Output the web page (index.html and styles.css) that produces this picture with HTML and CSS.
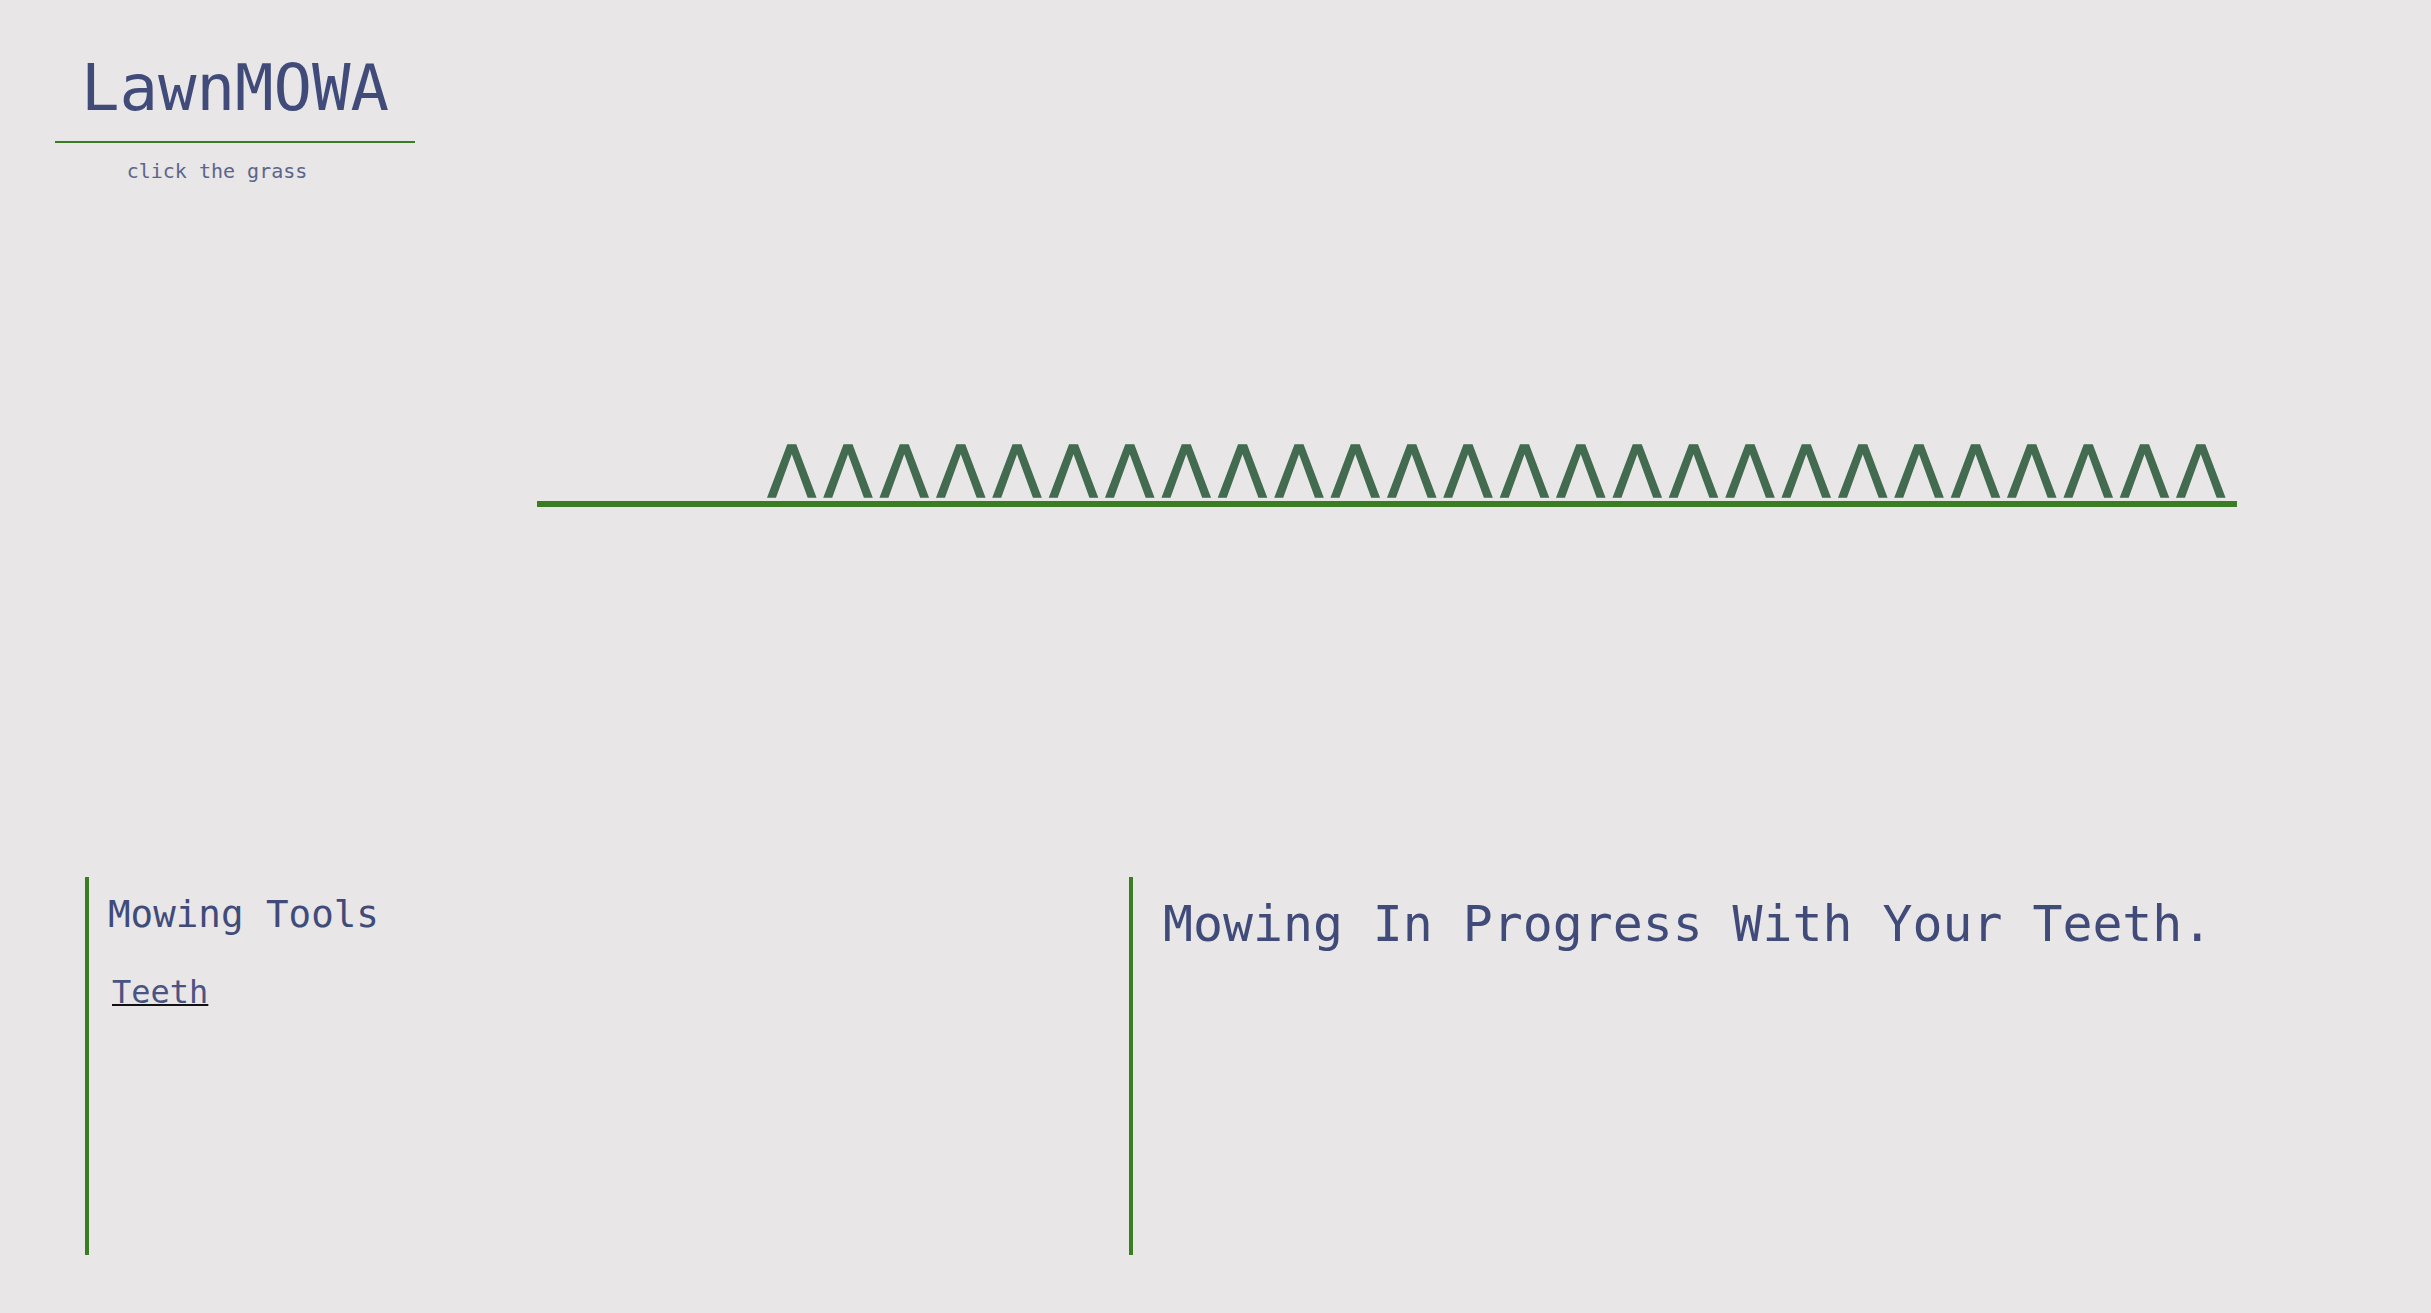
FILE: index.html
```html
<!DOCTYPE html>
<html>
<head>
    <title>LawnMOWA</title>
    <link rel="stylesheet" href="styles.css">
</head>
<body>
    <header class="brand">
        <h1 class="brand-title">LawnMOWA</h1>
        <p class="brand-tag">click the grass</p>
    </header>
    <section class="lawn">
        <div class="grass" id="grass">
            <div class="blades">ΛΛΛΛΛΛΛΛΛΛΛΛΛΛΛΛΛΛΛΛΛΛΛΛΛΛ</div>
        </div>
    </section>
    <section class="panels">
        <aside class="tools">
            <h2 class="tools-title">Mowing Tools</h2>
            <a class="tool-link" href="#">Teeth</a>
        </aside>
        <div class="status">
            <h2 class="status-text">Mowing In Progress With Your Teeth.</h2>
        </div>
    </section>
</body>
</html>
```

FILE: styles.css
```css
body {
    margin: 0;
    background-color: #e8e6e6;
    color: #414b7a;
    font-family: "DejaVu Sans Mono", "Liberation Mono", monospace;
}
.brand {
    width: 360px;
    margin-left: 55px;
    padding-top: 50px;
}
.brand-title {
    margin: 0;
    padding-bottom: 14px;
    font-size: 64px;
    font-weight: normal;
    line-height: 1.2;
    text-align: center;
    border-bottom: 2px solid #3a7d22;
}
.brand-tag {
    margin: 16px 0 0;
    padding-right: 36px;
    font-size: 20px;
    line-height: 1.2;
    text-align: center;
    color: #5c6589;
}
.lawn {
    margin-top: 262px;
}
.grass {
    width: 1700px;
    margin-left: 537px;
    border-bottom: 6px solid #3a7d22;
    cursor: pointer;
}
.blades {
    height: 56px;
    padding-right: 4px;
    font-family: "DejaVu Sans", sans-serif;
    font-size: 71px;
    line-height: 56px;
    letter-spacing: 7.8px;
    text-align: right;
    color: #426b4f;
    -webkit-text-stroke: 1.5px #426b4f;
}
.panels {
    display: grid;
    grid-template-columns: 1044px 1fr;
    margin: 370px 85px 0;
    height: 378px;
}
.tools, .status {
    border-left: 4px solid #3a7d22;
}
.tools {
    padding: 15px 19px;
}
.tools-title {
    margin: 0 0 36px;
    font-size: 37.5px;
    font-weight: normal;
    line-height: 1.2;
}
.tool-link {
    margin-left: 4px;
    font-size: 32px;
    line-height: 1.2;
    color: #4a5482;
    text-decoration-color: #111;
    text-decoration-thickness: 2px;
}
.status {
    padding: 18px 30px;
}
.status-text {
    margin: 0;
    font-size: 49.8px;
    font-weight: normal;
    line-height: 1.2;
    white-space: nowrap;
}
```
